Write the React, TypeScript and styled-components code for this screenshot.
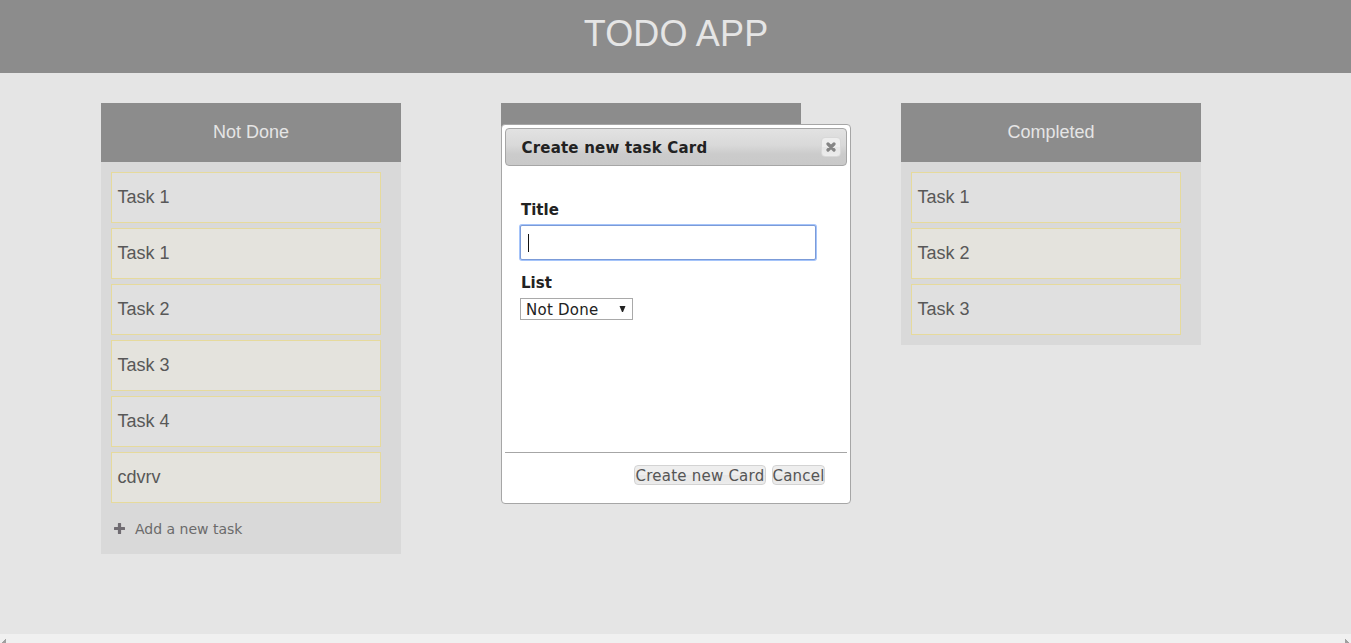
import React from "react";
import styled, { createGlobalStyle } from "styled-components";

const GlobalStyle = createGlobalStyle`
  *, *::before, *::after { box-sizing: border-box; }
  html, body { margin: 0; padding: 0; overflow: hidden; }
  body { background: #e5e5e5; font-family: "Liberation Sans", Arial, sans-serif; }
`;

const Page = styled.div`
  position: relative;
  display: flex;
  flex-direction: column;
  height: 643px;
  overflow: hidden;
  background: #e5e5e5;
`;

const Header = styled.header`
  flex: none;
  height: 73px;
  padding-top: 14px;
  background: #8c8c8c;
  text-align: center;
`;

const AppTitle = styled.h1`
  margin: 0;
  padding-left: 1px;
  font-size: 36px;
  line-height: 40px;
  font-weight: 400;
  letter-spacing: 0.15px;
  color: #e5e5e5;
`;

const Board = styled.main`
  flex: 1;
  display: flex;
  align-items: flex-start;
  gap: 100px;
  padding: 30px 0 0 101px;
`;

const Column = styled.section`
  flex: none;
  width: 300px;
  background: #d9d9d9;
`;

const ColumnTitle = styled.h2`
  height: 59px;
  margin: 0;
  background: #8c8c8c;
  color: #e5e5e5;
  font-size: 18px;
  line-height: 58px;
  font-weight: 400;
  text-align: center;
`;

const TaskList = styled.ul`
  display: flex;
  flex-direction: column;
  gap: 5px;
  margin: 0;
  padding: 10px 20px 10px 10px;
  list-style: none;
`;

const Task = styled.li<{ $alt: boolean }>`
  height: 51px;
  padding-left: 5.5px;
  border: 1px solid #e6da9c;
  background: ${(p) => (p.$alt ? "#e4e3dd" : "#e0e0e0")};
  color: #585858;
  font-size: 18px;
  line-height: 48px;
`;

const AddTask = styled.button`
  display: flex;
  align-items: center;
  gap: 10px;
  height: 41px;
  padding: 0 0 10px 13px;
  border: 0;
  background: none;
  color: #6b6b6b;
  font: 14px "DejaVu Sans", Verdana, sans-serif;
`;

const Dialog = styled.div`
  position: absolute;
  left: 501px;
  top: 124px;
  width: 350px;
  height: 380px;
  display: flex;
  flex-direction: column;
  padding: 3px;
  border: 1px solid #a6a6a6;
  border-radius: 4px;
  background: #fff;
  color: #222;
  font-family: "DejaVu Sans", Verdana, sans-serif;
  font-size: 15px;
`;

const TitleBar = styled.div`
  flex: none;
  display: flex;
  align-items: center;
  justify-content: space-between;
  height: 38px;
  padding: 0 5px 0 15.5px;
  border: 1px solid #a6a6a6;
  border-radius: 4px;
  background: linear-gradient(#e2e2e2 0%, #d9d9d9 45%, #cbcbcb 70%, #c9c9c9 100%);
`;

const DialogTitle = styled.span`
  padding-top: 2px;
  font-weight: 700;
  font-size: 15px;
  letter-spacing: 0.2px;
`;

const CloseButton = styled.button`
  display: flex;
  align-items: center;
  justify-content: center;
  width: 20px;
  height: 20px;
  padding: 0;
  border: 1px solid #d8d8d8;
  border-radius: 4px;
  background: linear-gradient(#eee 50%, #e6e6e6 50%, #ececec);
`;

const Form = styled.div`
  flex: 1;
  display: flex;
  flex-direction: column;
  align-items: flex-start;
  padding: 34px 15px 0;
`;

const Label = styled.label`
  height: 20px;
  line-height: 20px;
  padding-left: 1px;
  font-weight: 700;
  font-size: 15px;
`;

const TextField = styled.div`
  display: flex;
  align-items: center;
  width: 296px;
  height: 35px;
  margin: 5px 0 13px;
  padding-left: 7px;
  border: 1px solid #7b9bd8;
  border-radius: 2px;
  box-shadow: 0 0 0 1px #a5c4fa;
  background: #fff;
`;

const Caret = styled.span`
  width: 1px;
  height: 18px;
  background: #111;
`;

const Picker = styled.div`
  display: flex;
  align-items: center;
  justify-content: space-between;
  width: 113px;
  height: 22px;
  margin-top: 5px;
  padding: 0 6px 0 5px;
  border: 1px solid #a9a9a9;
  letter-spacing: 0.25px;
`;

const PickerValue = styled.span`
  padding-top: 2px;
`;

const ButtonPane = styled.div`
  flex: none;
  display: flex;
  justify-content: flex-end;
  align-items: flex-start;
  gap: 6px;
  height: 48px;
  padding: 12px 22px 0 0;
  border-top: 1px solid #a6a6a6;
`;

const ActionButton = styled.button<{ $width: number }>`
  display: flex;
  align-items: center;
  justify-content: center;
  width: ${(p) => p.$width}px;
  height: 20px;
  padding: 2px 0 0;
  border: 1px solid #d3d3d3;
  border-radius: 4px;
  background: linear-gradient(#eee 50%, #e6e6e6 50%, #ececec);
  color: #555;
  font: 15px "DejaVu Sans", Verdana, sans-serif;
  letter-spacing: 0.22px;
  white-space: nowrap;
`;

const ScrollBar = styled.footer`
  flex: none;
  display: flex;
  justify-content: space-between;
  height: 9px;
  padding: 5px 1px 0;
  background: #f0f0f0;
`;

function Tasks({ items }: { items: string[] }) {
  return (
    <TaskList>
      {items.map((t, i) => (
        <Task key={i} $alt={i % 2 === 1}>{t}</Task>
      ))}
    </TaskList>
  );
}

export default function App() {
  return (
    <>
      <GlobalStyle />
      <Page>
        <Header>
          <AppTitle>TODO APP</AppTitle>
        </Header>
        <Board>
          <Column>
            <ColumnTitle>Not Done</ColumnTitle>
            <Tasks items={["Task 1", "Task 1", "Task 2", "Task 3", "Task 4", "cdvrv"]} />
            <AddTask>
              <svg width="11" height="11" viewBox="0 0 11 11">
                <path d="M4.5 0h2q.6 0 .6.6V4h3.3q.6 0 .6.6v1.8q0 .6-.6.6H7.1v3.4q0 .6-.6.6h-2q-.6 0-.6-.6V7H.6Q0 7 0 6.400V4.600Q0 4 .6 4h3.300V.6q0-.6.6-.6z" fill="#706c72" />
              </svg>
              Add a new task
            </AddTask>
          </Column>
          <Column>
            <ColumnTitle />
          </Column>
          <Column>
            <ColumnTitle>Completed</ColumnTitle>
            <Tasks items={["Task 1", "Task 2", "Task 3"]} />
          </Column>
        </Board>
        <ScrollBar>
          <svg width="5" height="4" viewBox="0 0 5 4">
            <path d="M5 0v4H1V3h1V2h1V1h1V0z" fill="#a0a0a0" />
          </svg>
          <svg width="5" height="4" viewBox="0 0 5 4">
            <path d="M0 0h1v1h1v1h1v1h1v1H0z" fill="#a0a0a0" />
          </svg>
        </ScrollBar>
        <Dialog role="dialog">
          <TitleBar>
            <DialogTitle>Create new task Card</DialogTitle>
            <CloseButton aria-label="Close">
              <svg width="10" height="10" viewBox="0 0 10 10">
                <path d="M2 2l6 6M8 2L2 8" stroke="#858585" strokeWidth="3.2" strokeLinecap="round" />
              </svg>
            </CloseButton>
          </TitleBar>
          <Form>
            <Label>Title</Label>
            <TextField>
              <Caret />
            </TextField>
            <Label>List</Label>
            <Picker>
              <PickerValue>Not Done</PickerValue>
              <svg width="7" height="7" viewBox="0 0 7 7">
                <path d="M.5 0h6L4 6H3z" fill="#222" />
              </svg>
            </Picker>
          </Form>
          <ButtonPane>
            <ActionButton $width={132}>Create new Card</ActionButton>
            <ActionButton $width={53}>Cancel</ActionButton>
          </ButtonPane>
        </Dialog>
      </Page>
    </>
  );
}
